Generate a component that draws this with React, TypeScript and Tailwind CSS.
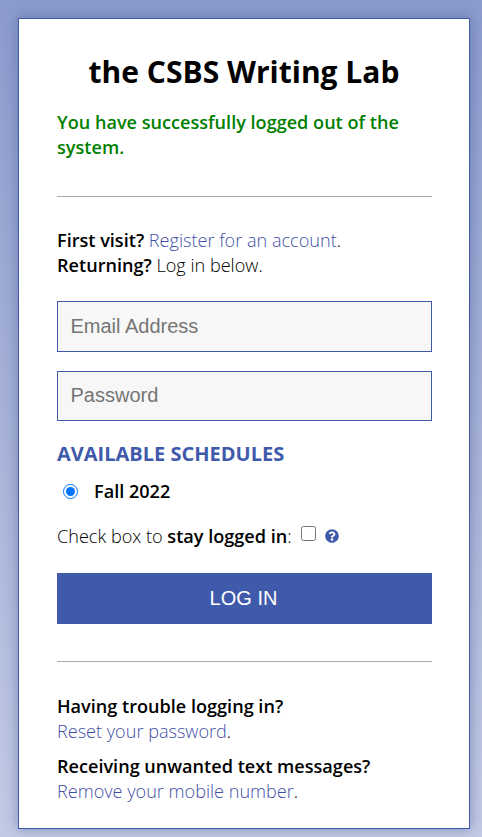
import { FaQuestionCircle } from 'react-icons/fa';

export default function App() {
  return (
    <div className="min-h-screen bg-gradient-to-b from-[#8b9acc] to-[#c2cae4] pt-[18px] pr-[12px] pb-[9px] pl-[18px] font-['Open_Sans',sans-serif] text-[18.1px] leading-[24.5px] text-black">
      <div className="border border-[#3f5aab] bg-white pt-[31px] pr-[37px] pb-[25px] pl-[38px] shadow-[0_0_12px_rgba(50,70,130,0.45)]">
        <h1 className="-ml-px text-center text-[30px] leading-[44px] font-bold">the CSBS Writing Lab</h1>

        <p className="mt-[16px] font-semibold text-[#008000]">You have successfully logged out of the system.</p>

        <hr className="mt-[37px] border-t border-[#aaaaaa]" />

        <p className="mt-[31px] font-light">
          <b className="font-semibold">First visit?</b>{' '}
          <a className="text-[#3f50a6]">Register for an account</a>.
          <br />
          <b className="font-semibold">Returning?</b> Log in below.
        </p>

        <form className="mt-[24px]">
          <input
            placeholder="Email Address"
            className="block h-[51px] w-full border border-[#3f5aab] bg-[#f7f7f7] px-[12.5px] pb-[1px] font-['Liberation_Sans',sans-serif] text-[20px] placeholder:text-[#757575]"
          />
          <input
            placeholder="Password"
            className="mt-[19px] block h-[50px] w-full border border-[#3f5aab] bg-[#f7f7f7] px-[12.5px] pb-[2px] font-['Liberation_Sans',sans-serif] text-[20px] placeholder:text-[#757575]"
          />

          <h2 className="mt-[20px] text-[20px] leading-[26px] font-bold text-[#3f5aab] uppercase">Available Schedules</h2>

          <label className="mt-[12px] ml-[6px] flex items-center gap-[16px] font-semibold">
            <input type="radio" name="schedule" defaultChecked className="h-[15px] w-[15px]" />
            Fall 2022
          </label>

          <div className="mt-[20px] flex items-center font-light">
            <span>
              Check box to <b className="font-semibold">stay logged in</b>:
            </span>
            <input type="checkbox" className="mb-[4px] ml-[9px] h-[15px] w-[15px]" />
            <FaQuestionCircle className="ml-[9px] text-[14px] text-[#3f5aab]" />
          </div>

          <button type="button" className="mt-[25px] block h-[51px] w-full bg-[#3f5aab] pr-[2px] font-['Liberation_Sans',sans-serif] text-[20px] text-white">
            LOG IN
          </button>
        </form>

        <hr className="mt-[37px] border-t border-[#aaaaaa]" />

        <p className="mt-[32px] font-light">
          <b className="font-semibold">Having trouble logging in?</b>
          <br />
          <a className="text-[#3f50a6]">Reset your password</a>.
        </p>
        <p className="mt-[11px] font-light">
          <b className="font-semibold">Receiving unwanted text messages?</b>
          <br />
          <a className="text-[#3f50a6]">Remove your mobile number</a>.
        </p>
      </div>
    </div>
  );
}
